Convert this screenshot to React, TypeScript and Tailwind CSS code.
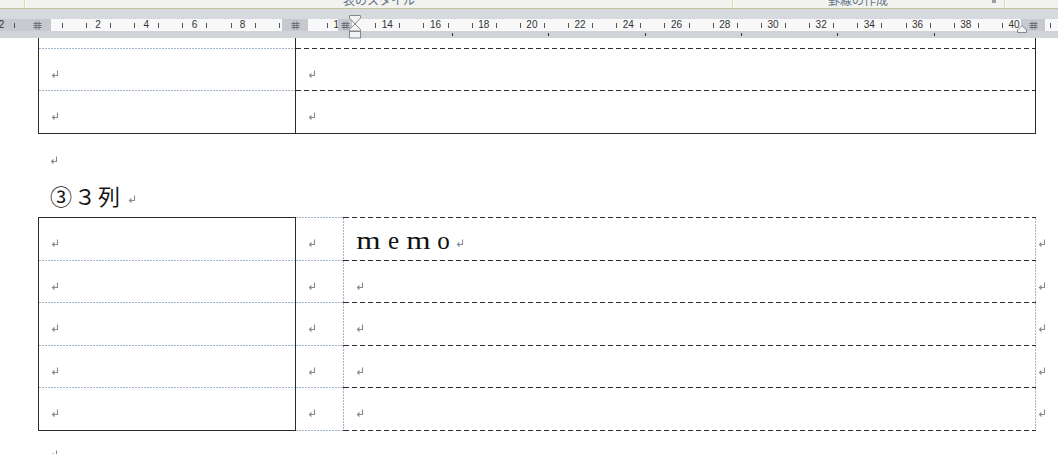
import React from "react";

type K = "s" | "d" | "g";

const H: Record<K, string> = {
  s: "bg-[#2b2b2b]",
  d: "bg-[image:repeating-linear-gradient(90deg,#2b2b2b_0px,#2b2b2b_5px,transparent_5px,transparent_8px)]",
  g: "bg-[image:repeating-linear-gradient(90deg,#a3b5ca_0px,#a3b5ca_2px,transparent_2px,transparent_3px)]",
};
const V: Record<K, string> = {
  s: "bg-[#2b2b2b]",
  d: "bg-[image:repeating-linear-gradient(180deg,#2b2b2b_0px,#2b2b2b_5px,transparent_5px,transparent_8px)]",
  g: "bg-[image:repeating-linear-gradient(180deg,#a3b5ca_0px,#a3b5ca_2px,transparent_2px,transparent_3px)]",
};

function Mark({ className = "" }: { className?: string }) {
  return (
    <svg
      width="8"
      height="8"
      viewBox="0 0 8 8"
      fill="none"
      stroke="#868a94"
      strokeWidth="1.1"
      className={"shrink-0 " + className}
    >
      <path d="M6.5 0.5V5.5H1.5" />
      <path d="M3.5 3.5L1.5 5.5L3.5 7.5" />
    </svg>
  );
}

function ColMark({ className = "" }: { className?: string }) {
  return (
    <svg width="9" height="9" viewBox="0 0 9 9" fill="none" stroke="#6d7076" strokeWidth="1" className={className}>
      <path d="M3 0.5V8.5M6 0.5V8.5M0.5 2.5H8.5M0.5 4.5H8.5M0.5 6.5H8.5" />
    </svg>
  );
}

type Item =
  | { t: "line"; segs: K[] }
  | { t: "row"; h: string; cells: React.ReactNode[]; end?: React.ReactNode };

function GridTable({
  cols,
  vk,
  items,
  pads,
  end = false,
}: {
  cols: string;
  vk: K[];
  items: Item[];
  pads: string[];
  end?: boolean;
}) {
  return (
    <div className={"grid shrink-0 " + cols}>
      {items.map((it, i) => {
        const out: React.ReactNode[] = [];
        if (it.t === "line") {
          vk.forEach((v, j) => {
            const seg = it.segs[Math.min(j, it.segs.length - 1)];
            out.push(<div key={"c" + j} className={"h-px " + (v === "s" ? H.s : H[seg])} />);
            if (j < it.segs.length) out.push(<div key={"s" + j} className={"h-px " + H[it.segs[j]]} />);
          });
          if (end) out.push(<div key="e" className="h-px" />);
        } else {
          vk.forEach((v, j) => {
            out.push(<div key={"v" + j} className={"w-px " + it.h + " " + V[v]} />);
            if (j < it.cells.length)
              out.push(
                <div key={"x" + j} className={it.h + " flex items-center pt-2 " + pads[j]}>
                  {it.cells[j]}
                </div>
              );
          });
          if (end)
            out.push(
              <div key="e" className={it.h + " flex items-center pt-2 pl-[2px]"}>
                {it.end}
              </div>
            );
        }
        return <React.Fragment key={i}>{out}</React.Fragment>;
      })}
    </div>
  );
}

const U = 24.105;
const X0 = 49.8;

function Ruler() {
  const nums: { v: number; x: number }[] = [];
  for (let n = -2; n <= 40; n += 2) {
    if (n === 0) continue;
    nums.push({ v: Math.abs(n), x: X0 + n * U });
  }
  const ticks: number[] = [];
  for (let m = -3; m <= 41; m++) {
    const x = X0 + (m + 0.5) * U;
    if (x < 2 || (x > 28 && x < 50) || x > 1052) continue;
    ticks.push(x);
  }
  const tabs = [0, 1, 2, 3, 4, 5].map((i) => 452 + i * 96.3);
  return (
    <div className="relative shrink-0 h-[29px] bg-[#d6d9dd] flex flex-col">
      <div className="h-[10px] shrink-0" />
      <div className="relative shrink-0 h-[12px] bg-[#f8f8f8] overflow-hidden [font-family:'Liberation_Sans',sans-serif]">
        <div className="absolute left-0 top-0 bottom-0 w-[51px] bg-[#c6c9ce]" />
        {ticks.map((x, i) => (
          <div key={i} className="absolute top-[4px] h-[5px] w-px bg-[#505358]" style={{ left: Math.round(x) }} />
        ))}
        {nums.map((n, i) => (
          <div
            key={i}
            className="absolute top-0 text-[10px] leading-[12px] text-[#333] -translate-x-1/2"
            style={{ left: n.x }}
          >
            {n.v}
          </div>
        ))}
        <ColMark className="absolute left-[33px] top-[1.5px]" />
        <div className="absolute left-[282px] w-[26px] top-0 bottom-0 bg-[#c6c9ce] flex items-center justify-center">
          <ColMark />
        </div>
        <div className="absolute left-[338px] w-[14px] top-0 bottom-0 bg-[#c6c9ce] flex items-center justify-center">
          <ColMark />
        </div>
        <div className="absolute left-[1021px] w-[24px] top-0 bottom-0 bg-[#c6c9ce] flex items-center justify-center">
          <ColMark />
        </div>
      </div>
      <div className="relative shrink-0 h-[7px] bg-[#d0d3d8]">
        {tabs.map((x, i) => (
          <div key={i} className="absolute top-[2px] h-[3px] w-px bg-[#333]" style={{ left: Math.round(x) }} />
        ))}
      </div>
      <svg
        width="12"
        height="24"
        viewBox="0 0 12 24"
        className="absolute left-[349px] top-[6px]"
        fill="#f3f3f3"
        stroke="#85888e"
        strokeWidth="1"
      >
        <polygon points="0.5,0.5 11.5,0.5 11.5,3 6,9 0.5,3" />
        <polygon points="6,9 11.5,14.5 11.5,16 0.5,16 0.5,14.5" />
        <rect x="0.5" y="16.5" width="11" height="6.5" />
      </svg>
      <svg
        width="10"
        height="8"
        viewBox="0 0 10 8"
        className="absolute left-[1017px] top-[16px]"
        fill="#f3f3f3"
        stroke="#85888e"
        strokeWidth="1"
      >
        <polygon points="0.5,7.5 0.5,5 5,0.5 9.5,5 9.5,7.5" />
      </svg>
    </div>
  );
}

function Ribbon() {
  const label =
    "text-[12px] leading-[12px] mb-[2px] text-[#65748a] [font-family:'Noto_Sans_CJK_JP',sans-serif] whitespace-nowrap";
  const Sep = () => <div className="w-[2px] bg-[#dcd8b0] border-r border-[#fbfbf6]" />;
  return (
    <div className="h-[9px] shrink-0 flex bg-[#f2f3ef] border-b border-[#c6c29c] overflow-hidden">
      <div className="w-[24px]" />
      <Sep />
      <div className="w-[706px] flex items-end justify-center">
        <span className={label}>表のスタイル</span>
      </div>
      <Sep />
      <div className="w-[270px] flex items-end justify-center pr-[22px] relative">
        <span className={label}>罫線の作成</span>
        <div className="absolute right-[8px] top-0 w-[4px] h-[3px] bg-[#9aa0a8]" />
      </div>
      <Sep />
      <div className="flex-1" />
    </div>
  );
}

function Memo() {
  return (
    <div className="flex items-center">
      <span className="flex mb-[5px] text-[25px] leading-[25px] text-[#111] [font-family:'Liberation_Serif',serif]">
        <span className="inline-block w-[25px] text-center scale-x-125">m</span>
        <span className="inline-block w-[25px] text-center">e</span>
        <span className="inline-block w-[25px] text-center scale-x-125">m</span>
        <span className="inline-block w-[25px] text-center">o</span>
      </span>
      <Mark />
    </div>
  );
}

export default function App() {
  const m = <Mark />;
  const t1: Item[] = [
    { t: "row", h: "h-[10px]", cells: [null, null] },
    { t: "line", segs: ["g", "d"] },
    { t: "row", h: "h-[41px]", cells: [m, m] },
    { t: "line", segs: ["g", "d"] },
    { t: "row", h: "h-[42px]", cells: [m, m] },
    { t: "line", segs: ["s", "s"] },
  ];
  const t2: Item[] = [
    { t: "line", segs: ["s", "g", "d"] },
    { t: "row", h: "h-[42px]", cells: [m, m, <Memo key="memo" />], end: m },
    { t: "line", segs: ["g", "g", "d"] },
    { t: "row", h: "h-[41px]", cells: [m, m, m], end: m },
    { t: "line", segs: ["g", "g", "d"] },
    { t: "row", h: "h-[42px]", cells: [m, m, m], end: m },
    { t: "line", segs: ["g", "g", "d"] },
    { t: "row", h: "h-[41px]", cells: [m, m, m], end: m },
    { t: "line", segs: ["g", "g", "d"] },
    { t: "row", h: "h-[42px]", cells: [m, m, m], end: m },
    { t: "line", segs: ["s", "g", "d"] },
  ];
  return (
    <div className="w-[1058px] h-[454px] overflow-hidden bg-white flex flex-col">
      <Ribbon />
      <Ruler />
      <div className="shrink-0 bg-white pl-[38px] flex flex-col">
        <GridTable
          cols="grid-cols-[1px_256px_1px_739px_1px]"
          vk={["s", "s", "s"]}
          items={t1}
          pads={["pl-3", "pl-3"]}
        />
        <div className="shrink-0 h-[41px] pl-[12px] pt-[22px]">
          <Mark />
        </div>
        <div className="shrink-0 h-[42px] pl-[12px] pt-[9px]">
          <div className="flex items-end h-[22px]">
            <span className="text-[22px] leading-[22px] tracking-[2px] text-[#151515] [font-family:'Noto_Sans_CJK_JP',sans-serif] whitespace-nowrap">
              ③３列
            </span>
            <Mark className="ml-[6px] mb-[3px]" />
          </div>
        </div>
        <GridTable
          cols="grid-cols-[1px_256px_1px_47px_1px_691px_1px_22px]"
          vk={["s", "s", "g", "g"]}
          items={t2}
          pads={["pl-3", "pl-3", "pl-3"]}
          end
        />
        <div className="shrink-0 pl-[12px] pt-[19px]">
          <Mark />
        </div>
      </div>
    </div>
  );
}
